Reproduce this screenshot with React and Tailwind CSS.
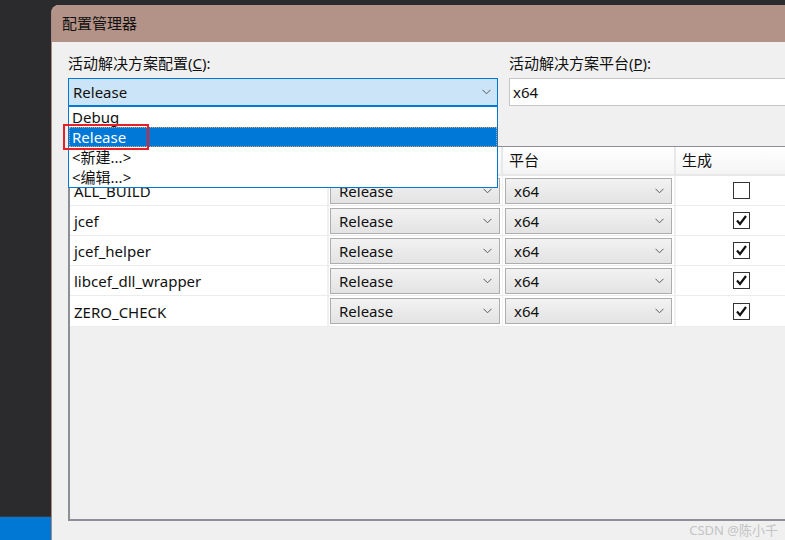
import React from 'react';

const FONT = { fontFamily: '"Noto Sans", "Noto Sans CJK SC", sans-serif' };

const rows = [
  { name: 'ALL_BUILD', build: false },
  { name: 'jcef', build: true },
  { name: 'jcef_helper', build: true },
  { name: 'libcef_dll_wrapper', build: true },
  { name: 'ZERO_CHECK', build: true },
];

function Chevron({ className = '' }) {
  return (
    <svg width="9" height="6" viewBox="0 0 9 6" className={className}>
      <polyline points="0.5,0.8 4.5,4.8 8.5,0.8" fill="none" stroke="#5a5a5a" strokeWidth="1" />
    </svg>
  );
}

function CellCombo({ value }) {
  return (
    <div className="h-[26px] flex items-center justify-between pl-[8px] pr-[7px] border border-[#adadad] bg-gradient-to-b from-[#f2f2f2] to-[#e3e3e3]">
      <span className="text-[15px] text-[#111] pt-[1px]">{value}</span>
      <Chevron />
    </div>
  );
}

function CheckBox({ checked }) {
  return (
    <div className="w-[17px] h-[17px] border border-[#333] bg-white flex items-center justify-center">
      {checked && (
        <svg width="13" height="13" viewBox="0 0 13 13">
          <polyline points="2,6.5 5,10 11,2" fill="none" stroke="#111" strokeWidth="2.2" />
        </svg>
      )}
    </div>
  );
}

export default function App() {
  return (
    <div className="w-[785px] h-[540px] overflow-hidden flex bg-[#2b2b2d]" style={FONT}>
      {/* left editor strip */}
      <div className="w-[51px] flex flex-col shrink-0">
        <div className="flex-1 bg-[#2b2b2d] border-b border-[#3a3a3c]" />
        <div className="h-[23px] bg-[#0078d4]" />
      </div>

      {/* dialog */}
      <div className="flex-1 pt-[5px] overflow-hidden">
        <div className="h-full flex flex-col rounded-tl-[8px] overflow-hidden border-l border-[#a88a80] bg-[#f0f0f0]">
          <div className="h-[37px] shrink-0 bg-[#b39287] flex items-center pl-[10px] text-[15px] text-[#111]">
            配置管理器
          </div>

          <div className="flex-1 relative pl-[16px]">
            <div className="flex gap-[11px] pt-[11px]">
              <div className="w-[430px] shrink-0">
                <div className="h-[20px] leading-[20px] text-[15px] text-[#111]">
                  活动解决方案配置(<span className="underline">C</span>):
                </div>
                <div className="mt-[5px] h-[28px] border border-[#0078d7] bg-[#cce4f7] flex items-center justify-between pl-[4px] pr-[6px]">
                  <span className="text-[15px] text-[#111]">Release</span>
                  <Chevron />
                </div>
              </div>
              <div className="w-[300px] shrink-0">
                <div className="h-[20px] leading-[20px] text-[15px] text-[#111]">
                  活动解决方案平台(<span className="underline">P</span>):
                </div>
                <div className="mt-[5px] h-[28px] border border-[#c6c6c6] bg-white flex items-center pl-[3px]">
                  <span className="text-[15px] text-[#111]">x64</span>
                </div>
              </div>
            </div>

            {/* project grid */}
            <div className="mt-[40px] w-[740px] h-[375px] border-t border-l-2 border-b-2 border-[#8c9096] bg-[#f0f0f0]">
              <div className="flex h-[29px] bg-gradient-to-b from-white to-[#f4f4f4] border-b-2 border-[#e8e8e8]">
                <div className="w-[259px] border-r-2 border-[#e8e8e8]" />
                <div className="w-[174px] border-r-2 border-[#e8e8e8]" />
                <div className="w-[173px] border-r-2 border-[#e8e8e8] pl-[6px] flex items-center text-[15px] text-[#111]">
                  平台
                </div>
                <div className="flex-1 pl-[6px] flex items-center text-[15px] text-[#111]">生成</div>
              </div>
              {rows.map((r, i) => (
                <div
                  key={r.name}
                  className={`flex bg-white border-b border-[#ececec] ${i === rows.length - 1 ? 'h-[31px]' : 'h-[30px]'}`}
                >
                  <div className="w-[259px] border-r-2 border-[#f0f0f0] pl-[4px] pt-[2px] flex items-center text-[15px] text-[#111]">
                    {r.name}
                  </div>
                  <div className="w-[174px] border-r border-[#f0f0f0] pl-[1px] pr-[2px] flex flex-col justify-center">
                    <CellCombo value="Release" />
                  </div>
                  <div className="w-[173px] border-r-2 border-[#f0f0f0] pl-[2px] pr-[2px] flex flex-col justify-center">
                    <CellCombo value="x64" />
                  </div>
                  <div className="flex-1 flex items-center justify-center pr-[2px]">
                    <CheckBox checked={r.build} />
                  </div>
                </div>
              ))}
            </div>

            <div className="h-[19px] flex justify-end items-center pr-[7px] text-[13px] text-[#c4c4c4]">
              CSDN @陈小千
            </div>

            {/* open dropdown list */}
            <div className="absolute left-[16px] top-[64px] w-[430px] h-[82px] border border-[#0078d7] bg-white">
              <div className="h-[20px] leading-[20px] pl-[3px] text-[15px] text-[#111]">Debug</div>
              <div className="h-[20px] leading-[18px] pl-[2px] text-[15px] text-white bg-[#0078d7] border border-dotted border-[#e0a060]">
                Release
              </div>
              <div className="h-[20px] leading-[20px] pl-[3px] text-[15px] text-[#111]">&lt;新建...&gt;</div>
              <div className="h-[20px] leading-[20px] pl-[3px] text-[15px] text-[#111]">&lt;编辑...&gt;</div>
            </div>

            {/* red highlight */}
            <div className="absolute left-[11px] top-[82px] w-[86px] h-[26px] border-2 border-[#e5202a]" />
          </div>
        </div>
      </div>
    </div>
  );
}
